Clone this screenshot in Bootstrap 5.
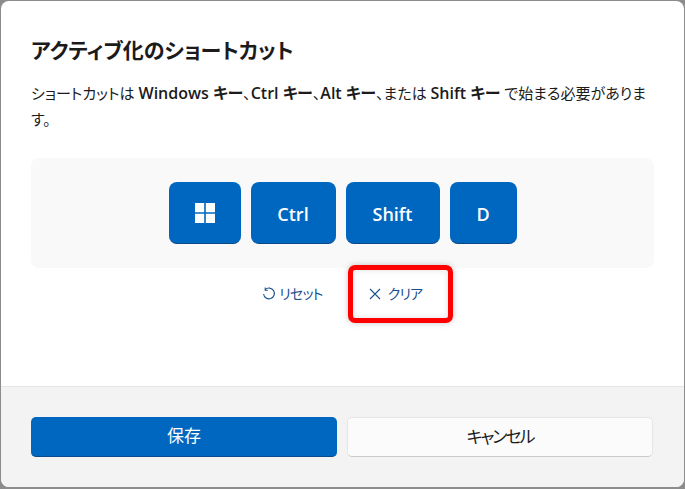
<!DOCTYPE html>
<html lang="ja">
<head>
<meta charset="utf-8">
<title>アクティブ化のショートカット</title>
<link href="https://cdn.jsdelivr.net/npm/bootstrap@5.3.0/dist/css/bootstrap.min.css" rel="stylesheet">
<style>
html, body { height: 100%; }
body { background: #8c8c8c; font-family: "Open Sans", "Noto Sans CJK JP", sans-serif; font-feature-settings: "palt"; color: #1b1b1b; overflow: hidden; padding: 1px 1px 2px 1px; }
.dlg { height: 486px; background: #fff; border-radius: 8px; overflow: hidden; }
.dlg-body { flex: 1 1 auto; padding: 31px 30px 0; }
.dlg-title { font-size: 21px; font-weight: 600; line-height: 36px; margin: 0 0 12px; }
.dlg-text { font-size: 15px; line-height: 26px; margin: 0 0 26px; font-weight: 400; }
.dlg-text b { font-weight: 600; font-size: 16px; }
.key-panel { height: 110px; background: #f9f9f9; border-radius: 8px; gap: 10px; }
.key-cap { height: 62px; border-radius: 8px; background: #0067c0; border-bottom: 1px solid #0a4a8a; color: #fff; font-size: 18px; font-weight: 600; }
.key-label { padding-top: 3px; }
.key-win { width: 72px; }
.key-ctrl { width: 85px; }
.key-shift { width: 94px; }
.key-d { width: 67px; }
.win-grid { width: 20px; height: 20px; }
.act-row { height: 52px; padding-left: 220px; }
.act-link { color: #1a4f8f; font-size: 14px; line-height: 20px; letter-spacing: -.8px; }
.act-reset { width: 87px; margin-right: 10px; padding-right: 4px; gap: 3px; }
.act-clear { width: 105px; height: 58px; position: relative; padding-right: 10px; gap: 7px; flex: none; }
.clear-mark { position: absolute; inset: 0; border: 5px solid #f00; border-radius: 7px; box-shadow: 0 0 6px rgba(0,0,0,.22), inset 0 0 6px rgba(0,0,0,.12); }
.dlg-foot { height: 101px; background: #f3f3f3; border-top: 1px solid #e5e5e5; padding: 30px 31px 0 30px; gap: 10px; }
.foot-btn { flex: 0 0 306px; height: 40px; border-radius: 5px; font-size: 17px; line-height: 38px; text-align: center; }
.foot-save { background: #0067c0; color: #fff; border-bottom: 1px solid #0a4a8a; }
.foot-cancel { background: #fbfbfb; color: #1b1b1b; border: 1px solid #e5e5e5; border-bottom-color: #ccc; letter-spacing: -2px; }
</style>
</head>
<body>
<div class="dlg d-flex flex-column">
  <div class="dlg-body">
    <h1 class="dlg-title">アクティブ化のショートカット</h1>
    <p class="dlg-text">ショートカットは <b>Windows キー</b>、<b>Ctrl キー</b>、<b>Alt キー</b>、または <b>Shift キー</b> で始まる必要があります。</p>
    <div class="key-panel d-flex justify-content-center align-items-center">
      <div class="key-cap key-win d-flex align-items-center justify-content-center">
        <svg class="win-grid" viewBox="0 0 20 20" aria-hidden="true"><path fill="#fff" d="M0 0h9.2v9.2H0zM10.8 0H20v9.2h-9.2zM0 10.8h9.2V20H0zM10.8 10.8H20V20h-9.2z"/></svg>
      </div>
      <div class="key-cap key-label key-ctrl d-flex align-items-center justify-content-center">Ctrl</div>
      <div class="key-cap key-label key-shift d-flex align-items-center justify-content-center">Shift</div>
      <div class="key-cap key-label key-d d-flex align-items-center justify-content-center">D</div>
    </div>
    <div class="act-row d-flex align-items-center">
      <div class="act-link act-reset d-flex align-items-center justify-content-center">
        <svg width="14" height="14" viewBox="0 0 14 14" fill="none" stroke="#1a4f8f" stroke-width="1.1" aria-hidden="true"><path d="M3.2 2.6A5.4 5.4 0 1 1 1.6 7"/><path d="M3.2 .6v2.6h2.6"/></svg>
        <span>リセット</span>
      </div>
      <div class="act-link act-clear d-flex align-items-center justify-content-center">
        <svg width="12" height="12" viewBox="0 0 12 12" fill="none" stroke="#1a4f8f" stroke-width="1.1" aria-hidden="true"><path d="M1 1l10 10M11 1L1 11"/></svg>
        <span>クリア</span>
        <div class="clear-mark"></div>
      </div>
    </div>
  </div>
  <div class="dlg-foot d-flex">
    <div class="foot-btn foot-save">保存</div>
    <div class="foot-btn foot-cancel">キャンセル</div>
  </div>
</div>
</body>
</html>
